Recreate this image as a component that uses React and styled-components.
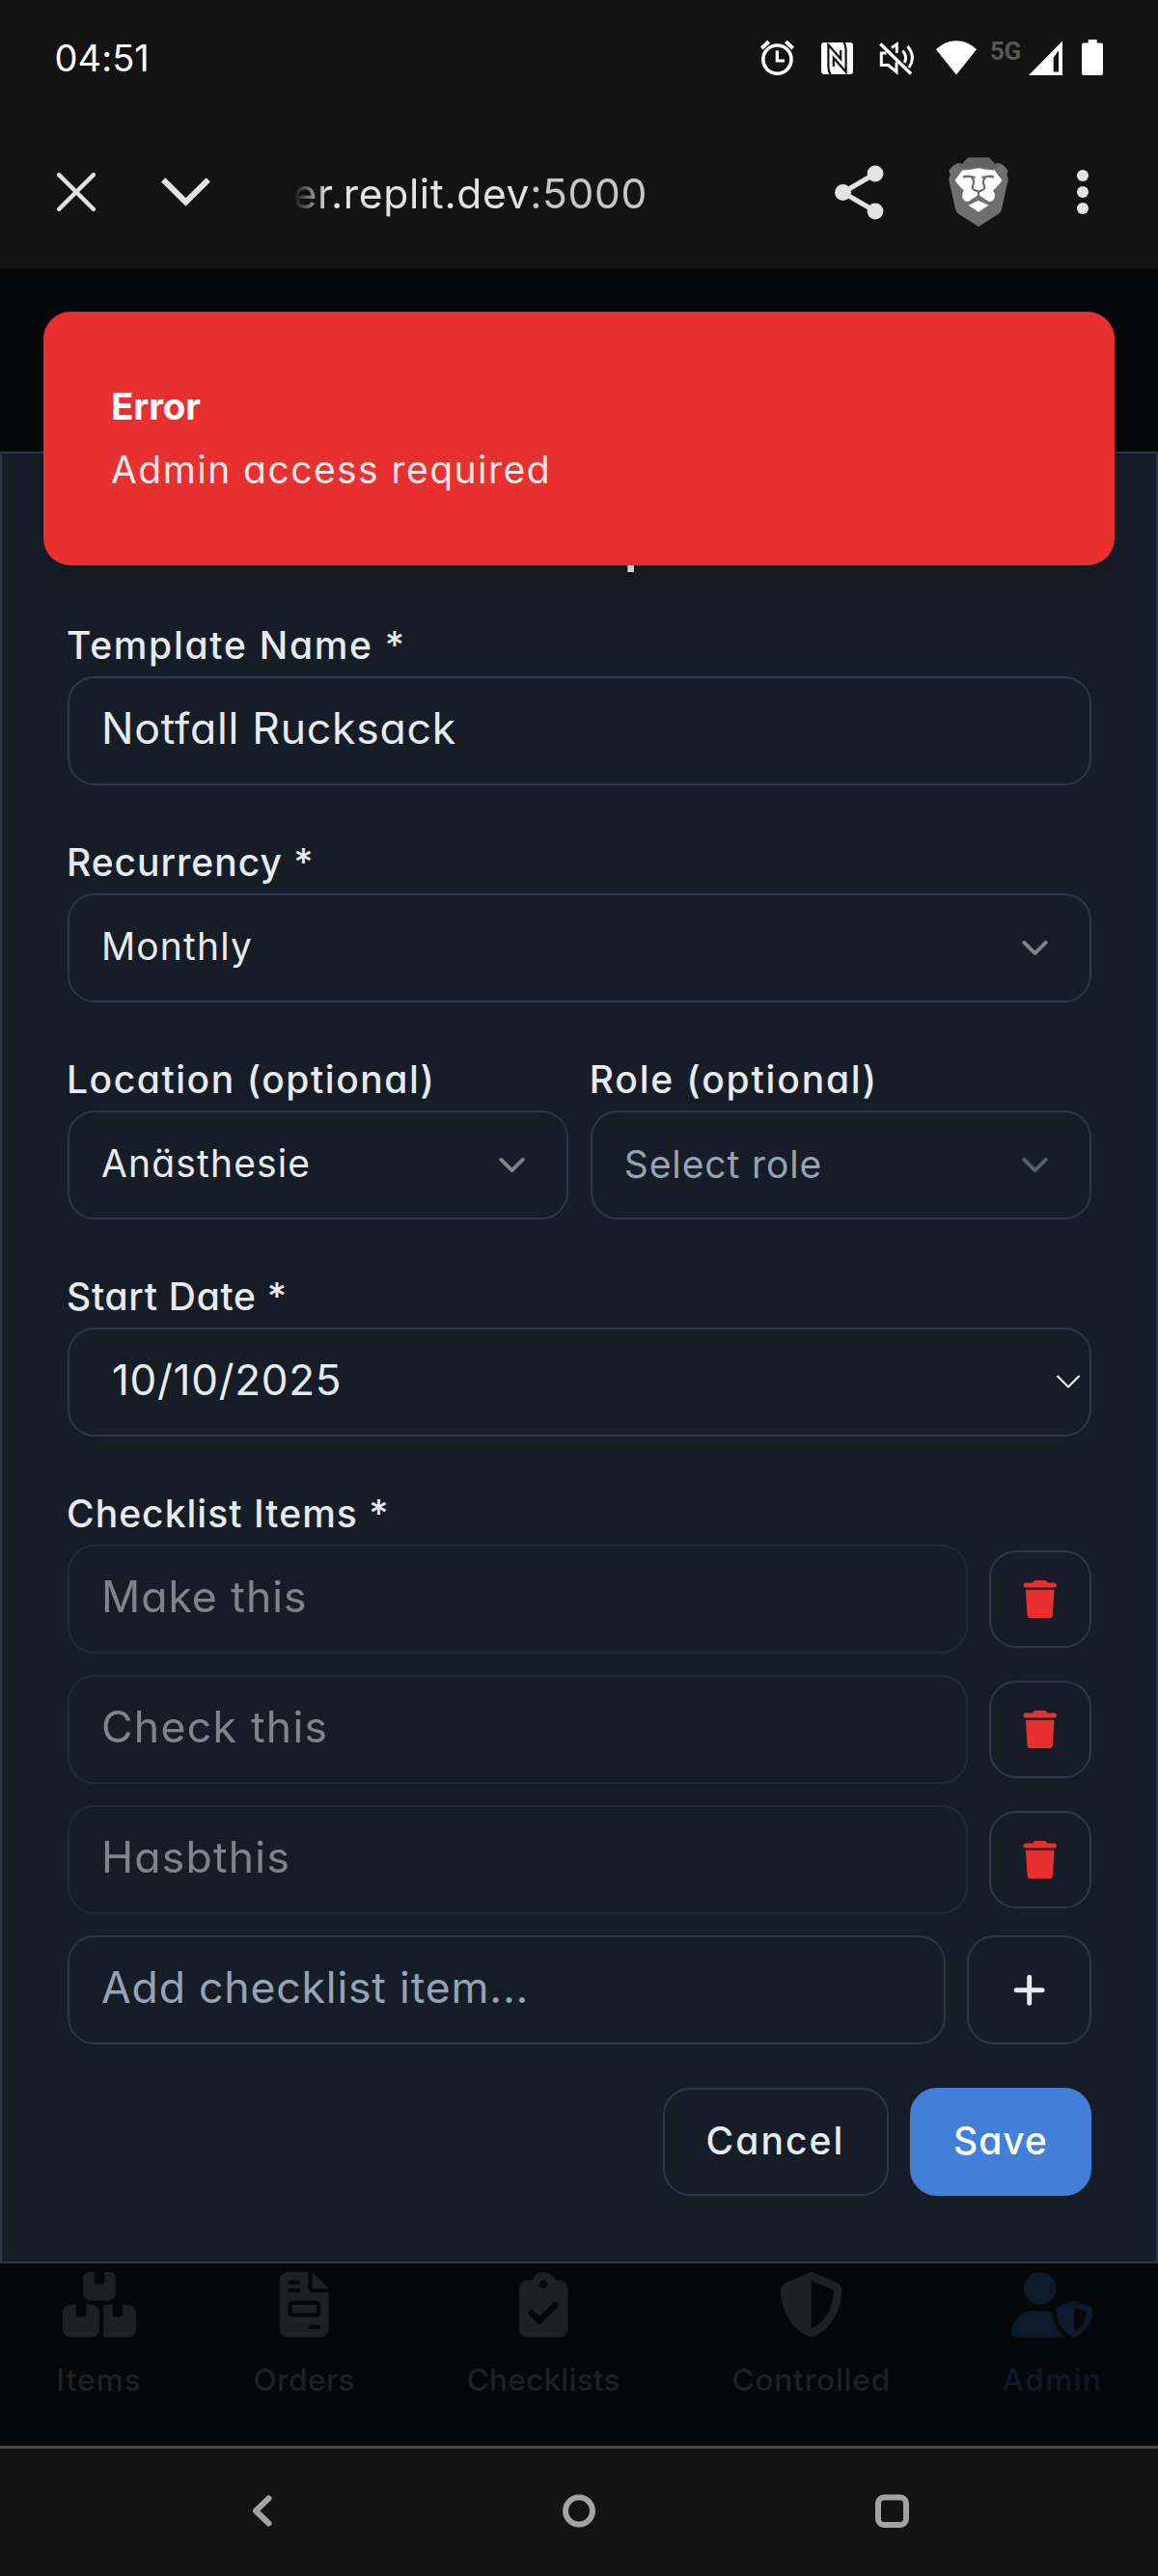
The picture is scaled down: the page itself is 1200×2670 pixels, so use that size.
import React from 'react';
import styled, { createGlobalStyle, css } from 'styled-components';
import { ChevronDown } from 'lucide-react';
import {
  FaBoxesStacked,
  FaClipboardCheck,
  FaFileInvoice,
  FaPlus,
  FaShieldHalved,
  FaTrash,
  FaUserShield,
} from 'react-icons/fa6';

const color = {
  chrome: '#131313',
  backdrop: '#060709',
  panel: '#171d26',
  border: '#2b384b',
  text: '#e7eaef',
  muted: '#97a3b5',
  danger: '#e83030',
  primary: '#427fd8',
};

const GlobalStyle = createGlobalStyle`
  *, *::before, *::after { box-sizing: border-box; }
  html, body { margin: 0; background: ${color.backdrop}; }
  body, input, button {
    font-family: Inter, "Open Sans", "Liberation Sans", sans-serif;
    font-feature-settings: "cv11" 1;
  }
  svg { display: block; flex: none; }
`;

const Screen = styled.div`
  display: flex;
  flex-direction: column;
  width: 1200px;
  height: 2670px;
  overflow: hidden;
  background: ${color.backdrop};
`;

/* ---------- phone status bar ---------- */

const StatusBar = styled.header`
  display: flex;
  justify-content: space-between;
  align-items: flex-start;
  height: 120px;
  padding: 41px 57px 0 56.5px;
  background: ${color.chrome};
`;

const Clock = styled.time`
  color: #fff;
  font-size: 38px;
  line-height: 38px;
  letter-spacing: 0.06px;
`;

const StatusIcons = styled.div`
  display: flex;
  align-items: flex-start;
`;

const Glyph = styled.svg`
  height: 37px;
  margin-left: ${(p) => p.$gap || 0}px;
  fill: ${(p) => (p.$stroke ? 'none' : '#fff')};
  stroke: ${(p) => (p.$stroke ? '#fff' : 'none')};
  stroke-width: ${(p) => p.$stroke || 0};
`;

const Network = styled.span`
  width: 32px;
  margin-left: 14px;
  color: #585858;
  font: 700 26px/24px Roboto, sans-serif;
  letter-spacing: -0.3px;
`;

/* ---------- browser bar ---------- */

const BrowserBar = styled.div`
  display: flex;
  align-items: center;
  height: 158px;
  padding: 0 72px 0 59px;
  background: ${color.chrome};
`;

const Address = styled.div`
  flex: 1;
  margin-left: 86px;
  padding-top: 3px;
  color: #e3e3e3;
  font-size: 42.5px;
  line-height: 54px;
  letter-spacing: 0.66px;
  white-space: nowrap;
  mask-image: linear-gradient(to right, transparent 0, #000 36px);
`;

const Port = styled.span`
  color: #c6c7c6;
`;

const BarIcon = styled.svg`
  width: ${(p) => p.$w}px;
  height: ${(p) => p.$h}px;
  margin-left: ${(p) => p.$gap || 0}px;
`;

/* ---------- page ---------- */

const Viewport = styled.main`
  position: relative;
  display: flex;
  flex-direction: column;
  height: 2257px;
  padding-top: 190px;
`;

const Toast = styled.div`
  position: absolute;
  z-index: 2;
  top: 45px;
  left: 45px;
  right: 45px;
  height: 262.5px;
  padding: 74.5px 70px 0;
  border-radius: 28px;
  background: ${color.danger};
  box-shadow: 0 28px 42px -8px rgba(0, 0, 0, 0.1), 0 11px 17px -11px rgba(0, 0, 0, 0.1);
`;

const ToastTitle = styled.div`
  color: #fff;
  font-size: 38.5px;
  font-weight: 650;
  line-height: 46px;
  letter-spacing: -0.1px;
`;

const ToastText = styled.div`
  margin-top: 19.5px;
  color: rgba(255, 255, 255, 0.9);
  font-size: 39px;
  line-height: 48px;
  letter-spacing: 1.45px;
`;

const Dialog = styled.section`
  flex: none;
  display: flex;
  flex-direction: column;
  padding: 69.5px 67px 67.7px 68px;
  border: 2px solid ${color.border};
  background: ${color.panel};
`;

const DialogTitle = styled.h2`
  margin: 0 0 59.5px;
  color: ${color.text};
  font-size: 51px;
  font-weight: 600;
  line-height: 50px;
  letter-spacing: 1.6px;
  text-align: center;
`;

const Form = styled.div`
  display: flex;
  flex-direction: column;
  gap: 60.5px;
`;

const Pair = styled.div`
  display: grid;
  grid-template-columns: 1fr 1fr;
  gap: 22.5px;
`;

const Field = styled.div`
  display: flex;
  flex-direction: column;
  min-width: 0;
`;

const Label = styled.label`
  height: 40px;
  margin: 0 0 12px -1px;
  color: ${color.text};
  font-size: 39px;
  font-weight: 500;
  line-height: 40px;
  letter-spacing: ${(p) => p.$track}px;
  white-space: nowrap;
`;

const box = css`
  height: 112.5px;
  border: 2px solid ${color.border};
  border-radius: 28px;
  background: ${color.panel};
`;

const TextInput = styled.input`
  ${box}
  flex: ${(p) => (p.$grow ? 1 : 'none')};
  min-width: 0;
  padding: 0 28px 5px 33px;
  color: ${color.text};
  font-size: 44.5px;
  letter-spacing: ${(p) => p.$track}px;
  outline: none;
  &::placeholder { color: ${color.muted}; opacity: 1; }
  &:disabled { opacity: 0.5; }
`;

const Select = styled.div`
  ${box}
  display: flex;
  align-items: center;
  justify-content: space-between;
  padding: 0 34px 0 33px;
  color: ${(p) => (p.$empty ? color.muted : color.text)};
  font-size: 39px;
  letter-spacing: ${(p) => p.$track}px;
  > span { padding-bottom: ${(p) => (p.$empty ? 2 : 4)}px; }
  > svg { opacity: 0.5; }
`;

const DateBox = styled.div`
  ${box}
  display: flex;
  align-items: center;
  justify-content: space-between;
  padding: 0 9px 0 44px;
  color: ${color.text};
  font-size: 44px;
  letter-spacing: 0.7px;
  > span { padding-bottom: 5px; }
`;

const Checklist = styled.div`
  display: flex;
  flex-direction: column;
  gap: 22.5px;
`;

const ChecklistRow = styled.div`
  display: flex;
  align-items: center;
  gap: 22.5px;
`;

const Button = styled.button`
  display: flex;
  align-items: center;
  justify-content: center;
  flex: none;
  width: ${(p) => p.$w}px;
  height: ${(p) => p.$h || 112.5}px;
  padding: 0;
  border: 2px solid ${(p) => (p.$primary ? color.primary : color.border)};
  border-radius: 28px;
  background: ${(p) => (p.$primary ? color.primary : color.panel)};
  color: ${(p) => (p.$danger ? color.danger : p.$primary ? '#fff' : color.text)};
  font-size: 39px;
  font-weight: 500;
  letter-spacing: ${(p) => p.$track || 0}px;
  > span { padding-bottom: 3px; }
`;

const Footer = styled.footer`
  display: flex;
  justify-content: flex-end;
  gap: 22.5px;
  margin-top: 45px;
`;

/* ---------- tab bar ---------- */

const TabBar = styled.nav`
  display: flex;
  justify-content: space-between;
  padding: 9.5px 57.5px 0 58.5px;
`;

const Tab = styled.div`
  display: flex;
  flex-direction: column;
  align-items: center;
  color: ${(p) => (p.$active ? '#0d1a2b' : '#1e2123')};
  font-size: 31.5px;
  font-weight: 500;
  line-height: 36px;
  letter-spacing: ${(p) => p.$track}px;
  > svg { width: ${(p) => p.$iconWidth}px; height: 67.5px; margin-bottom: 26px; }
`;

/* ---------- system navigation ---------- */

const SystemNav = styled.div`
  display: flex;
  align-items: center;
  height: 135px;
  padding: 0 0 3px 261px;
  border-top: 3px solid #484848;
  background: ${color.chrome};
`;

const NavIcon = styled.svg`
  width: ${(p) => p.$w}px;
  height: 35px;
  margin-left: ${(p) => p.$gap || 0}px;
  fill: none;
  stroke: #a3a3a3;
  stroke-width: 6;
  stroke-linecap: round;
  stroke-linejoin: round;
`;

const BraveLogo = () => (
  <BarIcon $w={62} $h={72} $gap={67} viewBox="0 0 62 72">
    <path fill="#6f6f6f" d="M20 .4h22L48 7q3-1.500 5.700-.2Q56 7.500 58 9.400L61.700 13.700 60.400 17.700 61.800 23 55 53.700Q54.200 57 52 58.600L31 72 10 58.600Q7.800 57 7 53.700L.2 23 1.600 17.700.3 13.700 4 9.400Q6 7.500 8.300 6.800 11 5.500 14 7Z" />
    <path fill="#636363" d="M20 .4h22L48 7q3-1.500 5.700-.2L47.500 12 31 10 14.500 12 8.300 6.800Q11 5.500 14 7Z" />
    <path fill="#fff" d="M14.300 13.500 23 12.800 31 11.300 39 12.800 47.700 13.500 55.200 23.500Q54.500 26.500 51.500 29L46.200 34.600Q48.700 38.500 47.500 42.500 45.500 46.300 41.800 46L31 39 20.200 46Q16.500 46.300 14.500 42.500 13.300 38.500 15.800 34.600L10.500 29Q7.500 26.500 6.800 23.500Z" />
    <path fill="#fff" d="M31 44.800 41.500 49.700 31 56.700 20.500 49.700Z" />
    <g fill="none" stroke="#6f6f6f" strokeWidth="2.200" strokeLinejoin="round">
      <path d="M15 20.400Q20.500 18.800 27.500 21.300M47 20.400Q41.500 18.800 34.500 21.300" strokeWidth="2.600" />
      <path d="M24 21.500Q27.500 25 25.400 28.500 23.600 32.500 26.300 33.800L31 35.600 35.700 33.800Q38.400 32.500 36.600 28.500 34.500 25 38 21.500" />
      <path d="M31 35.600V40" />
    </g>
  </BarIcon>
);

const StatusGlyphs = () => (
  <StatusIcons>
    <Glyph $stroke={3.6} width="35" viewBox="0 0 35 37">
      <circle cx="17.400" cy="20.600" r="14.600" />
      <path d="M17.300 11.500V22H25" strokeWidth="3.200" />
      <path d="M1.300 9 8.600 2.300M33.700 9 26.400 2.300" strokeWidth="4" />
    </Glyph>
    <Glyph $gap={27.5} width="33" viewBox="0 0 33 37">
      <rect x="0" y="3" width="33" height="33" rx="3" />
      <path fill="none" stroke="#131313" strokeWidth="2.200" d="M9.800 37Q7.400 33 7.400 28V5.500L20.200 20V11M23.200 2Q25.600 6 25.600 11V33.500L12.800 19V28" />
    </Glyph>
    <Glyph $gap={27.5} $stroke={3} width="36" viewBox="0 0 36 37">
      <path d="M1.300 4.500 33 35.500" strokeWidth="3.400" />
      <path d="M7.500 14H2.300V26.500H9.500L18 33.500V23.500" />
      <path d="M13 8.500 18.300 4.800V14" />
      <path d="M24.500 11.500Q29.500 17.500 26.300 24M29.500 7Q38.500 18 31 29" />
    </Glyph>
    <Glyph $gap={23} width="42" viewBox="0 0 42 37">
      <path d="M0 10.200Q9 1.200 21 1.200T42 10.200L21 36.500Z" />
    </Glyph>
    <Network>5G</Network>
    <Glyph $gap={8} width="35" viewBox="0 0 35 37">
      <path fillRule="evenodd" d="M35 1.500V37H0ZM25.700 18.500V33.500H31V11.500Z" />
    </Glyph>
    <Glyph $gap={20} width="22" viewBox="0 0 22 37">
      <path d="M6.700 0h9v3.600H20q2 0 2 2V35q0 2-2 2H2q-2 0-2-2V5.600q0-2 2-2H6.700Z" />
    </Glyph>
  </StatusIcons>
);

const Chevron = () => <ChevronDown size={45} strokeWidth={2} color={color.text} />;

const items = [
  { text: 'Make this', track: 1 },
  { text: 'Check this', track: 1.31 },
  { text: 'Hasbthis', track: 1.24 },
];

const tabs = [
  { text: 'Items', track: 1.06, Icon: FaBoxesStacked, iconWidth: 76 },
  { text: 'Orders', track: 0.42, Icon: FaFileInvoice, iconWidth: 50.6 },
  { text: 'Checklists', track: 0.24, Icon: FaClipboardCheck, iconWidth: 50.6 },
  { text: 'Controlled', track: 0.81, Icon: FaShieldHalved, iconWidth: 67.5 },
  { text: 'Admin', track: 1.45, Icon: FaUserShield, iconWidth: 84.4, active: true },
];

export default function App() {
  return (
    <Screen>
      <GlobalStyle />
      <StatusBar>
        <Clock>04:51</Clock>
        <StatusGlyphs />
      </StatusBar>
      <BrowserBar>
        <BarIcon $w={40} $h={40} viewBox="0 0 40 40" fill="none" stroke="#e3e3e3" strokeWidth="4.400" strokeLinecap="round">
          <path d="M2.200 2.200 37.800 37.800M37.800 2.200 2.200 37.800" />
        </BarIcon>
        <BarIcon $w={51} $h={30} $gap={67.5} viewBox="0 0 51 30" fill="none" stroke="#e3e3e3" strokeWidth="6">
          <path d="M2.200 2.400 25.500 25.500 48.800 2.400" />
        </BarIcon>
        <Address>
          er.replit.dev<Port>:5000</Port>
        </Address>
        <BarIcon $w={51} $h={57} viewBox="0 0 51 57" fill="#e3e3e3" stroke="#e3e3e3">
          <path fill="none" strokeWidth="5" d="M42 9 8.500 28.500 42 48" />
          <circle cx="42" cy="9" r="8.400" stroke="none" />
          <circle cx="8.500" cy="28.500" r="8.400" stroke="none" />
          <circle cx="42" cy="48" r="8.400" stroke="none" />
        </BarIcon>
        <BraveLogo />
        <BarIcon $w={12} $h={46} $gap={71} viewBox="0 0 12 46" fill="#e3e3e3">
          <circle cx="6" cy="6" r="6" />
          <circle cx="6" cy="23" r="6" />
          <circle cx="6" cy="40" r="6" />
        </BarIcon>
      </BrowserBar>

      <Viewport>
        <Toast>
          <ToastTitle>Error</ToastTitle>
          <ToastText>Admin access required</ToastText>
        </Toast>

        <Dialog>
          <DialogTitle>Edit Template</DialogTitle>
          <Form>
            <Field>
              <Label $track={1.72}>Template Name *</Label>
              <TextInput $track={0.77} defaultValue="Notfall Rucksack" />
            </Field>
            <Field>
              <Label $track={0.97}>Recurrency *</Label>
              <Select $track={1.13}>
                <span>Monthly</span>
                <Chevron />
              </Select>
            </Field>
            <Pair>
              <Field>
                <Label $track={1.55}>Location (optional)</Label>
                <Select $track={1.15}>
                  <span>Anästhesie</span>
                  <Chevron />
                </Select>
              </Field>
              <Field>
                <Label $track={1.83}>Role (optional)</Label>
                <Select $track={0.9} $empty>
                  <span>Select role</span>
                  <ChevronDown size={45} color={color.muted} />
                </Select>
              </Field>
            </Pair>
            <Field>
              <Label $track={0.7}>Start Date *</Label>
              <DateBox>
                <span>10/10/2025</span>
                <svg width="26" height="16" viewBox="0 0 26 16" fill="none" stroke="#fff" strokeWidth="2">
                  <path d="M1.500 2 13 13.500 24.500 2" />
                </svg>
              </DateBox>
            </Field>
            <Field>
              <Label $track={1.04}>Checklist Items *</Label>
              <Checklist>
                {items.map((item) => (
                  <ChecklistRow key={item.text}>
                    <TextInput $grow $track={item.track} defaultValue={item.text} disabled />
                    <Button $w={106} $h={101.25} $danger aria-label="Remove">
                      <FaTrash size={39.4} />
                    </Button>
                  </ChecklistRow>
                ))}
                <ChecklistRow>
                  <TextInput $grow $track={0.84} placeholder="Add checklist item..." />
                  <Button $w={128.6} aria-label="Add">
                    <FaPlus size={39.4} />
                  </Button>
                </ChecklistRow>
              </Checklist>
            </Field>
          </Form>
          <Footer>
            <Button $w={234} $track={2.1}>
              <span>Cancel</span>
            </Button>
            <Button $w={188} $track={1.02} $primary>
              <span>Save</span>
            </Button>
          </Footer>
        </Dialog>

        <TabBar>
          {tabs.map(({ text, track, Icon, iconWidth, active }) => (
            <Tab key={text} $track={track} $iconWidth={iconWidth} $active={active}>
              <Icon />
              {text}
            </Tab>
          ))}
        </TabBar>
      </Viewport>

      <SystemNav>
        <NavIcon $w={21} viewBox="0 0 21 35">
          <path d="M17.500 4.500 4 17.500 17.500 30.500" />
        </NavIcon>
        <NavIcon $w={34} $gap={300.5} viewBox="0 0 34 35">
          <circle cx="17" cy="17.500" r="14" />
        </NavIcon>
        <NavIcon $w={35} $gap={290.5} viewBox="0 0 35 35">
          <rect x="3" y="3.500" width="29" height="28.500" rx="6" />
        </NavIcon>
      </SystemNav>
    </Screen>
  );
}
